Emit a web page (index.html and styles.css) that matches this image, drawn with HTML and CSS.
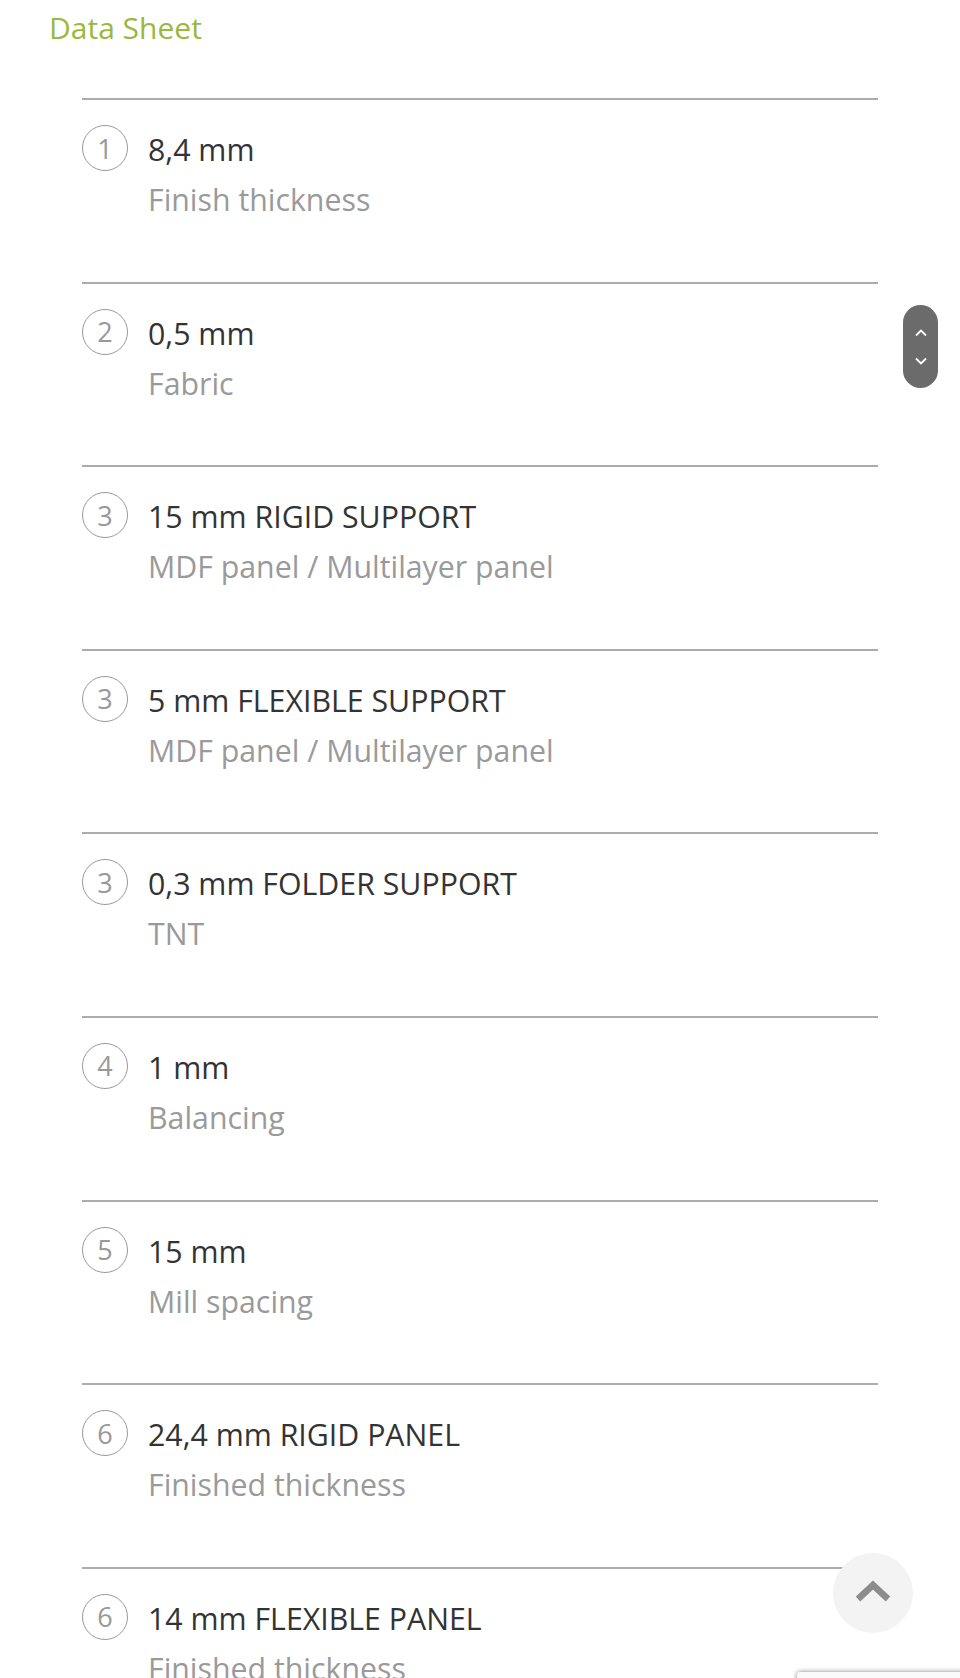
FILE: index.html
```html
<!DOCTYPE html>
<html lang="en">
<head>
    <meta charset="UTF-8">
    <meta name="viewport" content="width=device-width, initial-scale=1.0">
    <title>Data Sheet</title>
    <link rel="stylesheet" href="styles.css">
</head>
<body>
    <div class="page">
        <h2 class="sheet-title">Data Sheet</h2>
        <ul class="spec-list">
            <li class="spec-row">
                <span class="spec-num">1</span>
                <div class="spec-text">
                    <div class="spec-value">8,4 mm</div>
                    <div class="spec-label">Finish thickness</div>
                </div>
            </li>
            <li class="spec-row">
                <span class="spec-num">2</span>
                <div class="spec-text">
                    <div class="spec-value">0,5 mm</div>
                    <div class="spec-label">Fabric</div>
                </div>
            </li>
            <li class="spec-row">
                <span class="spec-num">3</span>
                <div class="spec-text">
                    <div class="spec-value">15 mm RIGID SUPPORT</div>
                    <div class="spec-label">MDF panel / Multilayer panel</div>
                </div>
            </li>
            <li class="spec-row">
                <span class="spec-num">3</span>
                <div class="spec-text">
                    <div class="spec-value">5 mm FLEXIBLE SUPPORT</div>
                    <div class="spec-label">MDF panel / Multilayer panel</div>
                </div>
            </li>
            <li class="spec-row">
                <span class="spec-num">3</span>
                <div class="spec-text">
                    <div class="spec-value">0,3 mm FOLDER SUPPORT</div>
                    <div class="spec-label">TNT</div>
                </div>
            </li>
            <li class="spec-row">
                <span class="spec-num">4</span>
                <div class="spec-text">
                    <div class="spec-value">1 mm</div>
                    <div class="spec-label">Balancing</div>
                </div>
            </li>
            <li class="spec-row">
                <span class="spec-num">5</span>
                <div class="spec-text">
                    <div class="spec-value">15 mm</div>
                    <div class="spec-label">Mill spacing</div>
                </div>
            </li>
            <li class="spec-row">
                <span class="spec-num">6</span>
                <div class="spec-text">
                    <div class="spec-value">24,4 mm RIGID PANEL</div>
                    <div class="spec-label">Finished thickness</div>
                </div>
            </li>
            <li class="spec-row">
                <span class="spec-num">6</span>
                <div class="spec-text">
                    <div class="spec-value">14 mm FLEXIBLE PANEL</div>
                    <div class="spec-label">Finished thickness</div>
                </div>
            </li>
        </ul>
    </div>

    <!-- floating scroll control -->
    <div class="scroll-pill">
        <svg width="14" height="9" viewBox="0 0 14 9"><polyline points="2,7.5 7,2.5 12,7.5" fill="none" stroke="#fff" stroke-width="1.8"/></svg>
        <svg width="14" height="9" viewBox="0 0 14 9"><polyline points="2,1.5 7,6.5 12,1.5" fill="none" stroke="#fff" stroke-width="1.8"/></svg>
    </div>

    <a class="back-top" href="#">
        <svg width="36" height="24" viewBox="0 0 36 24"><polyline points="3,20 18,6 33,20" fill="none" stroke="#8c8c8c" stroke-width="6.5"/></svg>
    </a>

    <div class="captcha-badge"></div>
</body>
</html>
```

FILE: styles.css
```css
body {
    margin: 0;
    padding: 0;
    font-family: "Open Sans", Arial, sans-serif;
    background-color: #fff;
    color: #333;
}
.page {
    height: 1678px;
    overflow: hidden;
}
.sheet-title {
    margin: 8px 0 0 49px;
    font-size: 30px;
    line-height: 40px;
    font-weight: 400;
    color: #9ab83c; /* olive green */
}
.spec-list {
    list-style: none;
    width: 796px;
    margin: 50px auto 0;
    padding: 0;
}
.spec-row {
    display: flex;
    align-items: flex-start;
    gap: 20px;
    border-top: 2px solid #acacac;
    padding: 26px 0 57.6px 0;
}
.spec-num {
    flex: 0 0 auto;
    width: 44px;
    height: 44px;
    margin-top: -1px;
    border: 1.5px solid #999;
    border-radius: 50%;
    display: flex;
    justify-content: center;
    align-items: center;
    font-size: 27px;
    color: #999;
}
.spec-text {
    font-size: 30.3px;
    line-height: 48px;
}
.spec-value {
    color: #333;
}
.spec-label {
    margin-top: 2px;
    color: #9a9a9a;
}

/* overlays */
.scroll-pill {
    position: fixed;
    left: 903px;
    top: 305px;
    width: 35px;
    height: 83px;
    border-radius: 18px;
    background-color: #6b6b6b;
    display: flex;
    flex-direction: column;
    align-items: center;
    justify-content: center;
    gap: 20px;
}
.back-top {
    position: fixed;
    left: 833px;
    top: 1553px;
    width: 80px;
    height: 80px;
    border-radius: 50%;
    background-color: #f3f3f3;
    display: flex;
    justify-content: center;
    align-items: center;
}
.back-top svg {
    margin-top: -4px;
}
.captcha-badge {
    position: fixed;
    left: 797px;
    top: 1672px;
    width: 256px;
    height: 60px;
    border-radius: 3px;
    background-color: #f9f9f9;
    box-shadow: 0 0 5px gray;
}
```
